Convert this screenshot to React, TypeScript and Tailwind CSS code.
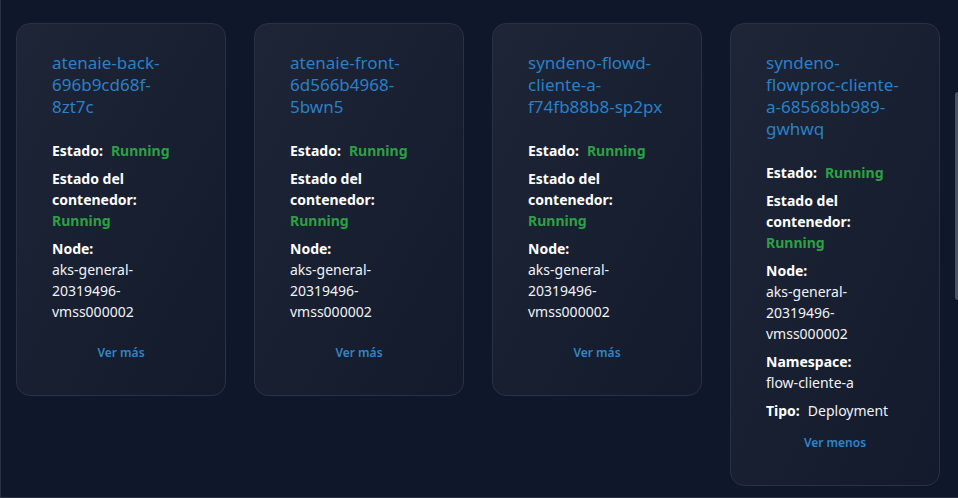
type Field = { label: string; value: string; status?: boolean };

type Pod = {
  name: string;
  fields: Field[];
  extra?: Field[];
  expanded?: boolean;
};

const pods: Pod[] = [
  {
    name: "atenaie-back-696b9cd68f-8zt7c",
    fields: [
      { label: "Estado:", value: "Running", status: true },
      { label: "Estado del contenedor:", value: "Running", status: true },
      { label: "Node:", value: "aks-general-20319496-vmss000002" },
    ],
  },
  {
    name: "atenaie-front-6d566b4968-5bwn5",
    fields: [
      { label: "Estado:", value: "Running", status: true },
      { label: "Estado del contenedor:", value: "Running", status: true },
      { label: "Node:", value: "aks-general-20319496-vmss000002" },
    ],
  },
  {
    name: "syndeno-flowd-cliente-a-f74fb88b8-sp2px",
    fields: [
      { label: "Estado:", value: "Running", status: true },
      { label: "Estado del contenedor:", value: "Running", status: true },
      { label: "Node:", value: "aks-general-20319496-vmss000002" },
    ],
  },
  {
    name: "syndeno-flowproc-cliente-a-68568bb989-gwhwq",
    fields: [
      { label: "Estado:", value: "Running", status: true },
      { label: "Estado del contenedor:", value: "Running", status: true },
      { label: "Node:", value: "aks-general-20319496-vmss000002" },
    ],
    extra: [
      { label: "Namespace:", value: "flow-cliente-a" },
      { label: "Tipo:", value: "Deployment" },
    ],
    expanded: true,
  },
];

function FieldRow({ field }: { field: Field }) {
  return (
    <div className="flex flex-wrap gap-x-2 text-sm leading-[21px]">
      <span className="font-bold text-white">{field.label}</span>
      <span className={field.status ? "font-bold text-[#2ea043]" : "text-[#f1f3f6]"}>
        {field.value}
      </span>
    </div>
  );
}

function PodCard({ pod }: { pod: Pod }) {
  const rows = pod.expanded && pod.extra ? [...pod.fields, ...pod.extra] : pod.fields;
  return (
    <div className="w-[210px] shrink-0 rounded-[14px] border border-[#293244] bg-gradient-to-br from-[#1d2537] to-[#121a2c] px-[35px] pt-7 pb-[34px]">
      <h3 className="text-[17px] leading-[22px] text-[#2b80c6] break-words">{pod.name}</h3>
      <div className="mt-[22px] space-y-[7px]">
        {rows.map((f) => (
          <FieldRow key={f.label} field={f} />
        ))}
      </div>
      <div
        className={
          pod.expanded
            ? "mt-[14px] text-center text-xs leading-4"
            : "mt-[23px] text-center text-xs leading-4"
        }
      >
        <button className="text-xs leading-4 font-semibold text-[#2f86cc]">
          {pod.expanded ? "Ver menos" : "Ver más"}
        </button>
      </div>
    </div>
  );
}

export default function App() {
  return (
    <div
      className="relative h-[498px] w-full overflow-hidden border-l border-b border-[#2a3243] bg-[#0f172a]"
      style={{ fontFamily: '"Noto Sans", "Open Sans", sans-serif' }}
    >
      <div className="flex items-start gap-7 pl-[15px] pt-[23px]">
        {pods.map((p) => (
          <PodCard key={p.name} pod={p} />
        ))}
      </div>
      {/* scrollbar thumb */}
      <div className="absolute right-0 top-[92px] h-[208px] w-[3px] rounded-l bg-[#4a5265]" />
    </div>
  );
}
